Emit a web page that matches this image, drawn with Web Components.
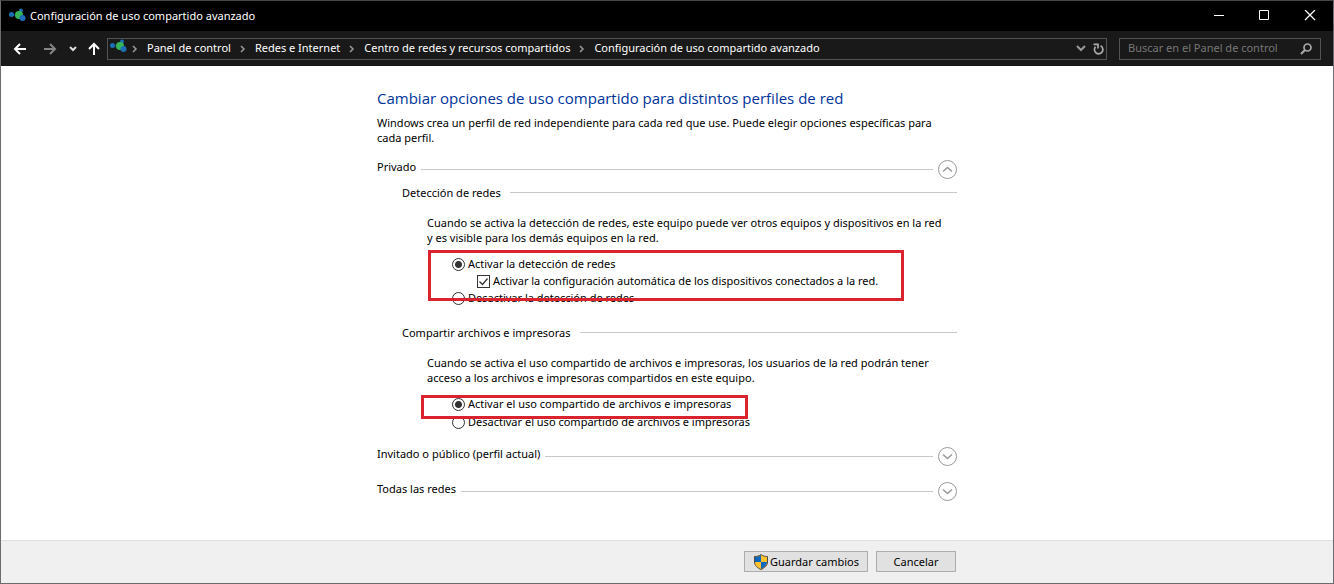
<!DOCTYPE html>
<html lang="es">
<head>
<meta charset="utf-8">
<meta name="viewport" content="width=device-width, initial-scale=1">
<title>Configuración de uso compartido avanzado</title>
<style>
  body {
    margin: 0;
    color: #000;
    background: #fff;
    font: 11px/15px "Noto Sans", "Open Sans", sans-serif;
  }
</style>
</head>
<body>

<settings-window>
  <title-bar slot="title">Configuración de uso compartido avanzado</title-bar>
  <nav-bar slot="nav"></nav-bar>

  <page-intro heading="Cambiar opciones de uso compartido para distintos perfiles de red">
    Windows crea un perfil de red independiente para cada red que use. Puede elegir opciones específicas para<br>cada perfil.
  </page-intro>

  <profile-section label="Privado" open>
    <setting-group heading="Detección de redes">
      <span slot="description">Cuando se activa la detección de redes, este equipo puede ver otros equipos y dispositivos en la red<br>y es visible para los demás equipos en la red.</span>
      <radio-pair name="discovery" on="Activar la detección de redes" off="Desactivar la detección de redes" mark="wide">
        <check-option label="Activar la configuración automática de los dispositivos conectados a la red."></check-option>
      </radio-pair>
    </setting-group>
    <setting-group heading="Compartir archivos e impresoras">
      <span slot="description">Cuando se activa el uso compartido de archivos e impresoras, los usuarios de la red podrán tener<br>acceso a los archivos e impresoras compartidos en este equipo.</span>
      <radio-pair name="sharing" on="Activar el uso compartido de archivos e impresoras" off="Desactivar el uso compartido de archivos e impresoras" mark="narrow"></radio-pair>
    </setting-group>
  </profile-section>
  <profile-section label="Invitado o público (perfil actual)"></profile-section>
  <profile-section label="Todas las redes"></profile-section>

  <action-bar slot="footer"></action-bar>
</settings-window>

<script>
(function () {
  'use strict';

  const NETWORK_ICON = `
    <svg width="18" height="16" viewBox="0 0 18 16" aria-hidden="true">
      <path d="M3 7h7l2-4M10 8l4 4" stroke="#1b5c8c" fill="none"/>
      <circle cx="2.500" cy="6.500" r="2.500" fill="#1b6fb5"/>
      <circle cx="12" cy="2.500" r="2" fill="#1b6fb5"/>
      <circle cx="10" cy="7" r="4" fill="#35b558"/>
      <circle cx="13.500" cy="10" r="3" fill="#1d70b8"/>
    </svg>`;

  // Attaches an open root and fills it; every element below goes through this
  class BaseElement extends HTMLElement {
    connectedCallback() {
      if (this.shadowRoot) return;
      this.attachShadow({ mode: 'open' });
      this.shadowRoot.innerHTML = `<style>*{box-sizing:border-box}button,input{font:inherit;margin:0}</style>${this.template()}`;
      this.ready();
    }

    ready() {}
  }

  class SettingsWindow extends BaseElement {
    template() {
      return `
        <style>
          :host {
            display: flex;
            flex-direction: column;
            box-sizing: border-box;
            min-height: 100vh;
            border: 1px solid #6c6c70;
            border-top-color: #444;
          }
          main { flex: 1; padding: 20px 16px; }
          .column { max-width: 580px; margin: 0 auto; }
        </style>
        <slot name="title"></slot>
        <slot name="nav"></slot>
        <main><div class="column"><slot></slot></div></main>
        <slot name="footer"></slot>`;
    }
  }

  class TitleBar extends BaseElement {
    template() {
      return `
        <style>
          :host { display: flex; align-items: center; height: 30px; padding-left: 8px; background: #000; color: #fff; }
          .text { flex: 1; margin-left: 3px; padding-bottom: 2px; white-space: nowrap; }
          button { width: 46px; height: 30px; padding: 0; border: 0; background: none; color: #fff; }
          svg { display: block; margin: auto; }
        </style>
        <span>${NETWORK_ICON}</span>
        <span class="text"><slot></slot></span>
        <button aria-label="Minimizar"><svg width="12" height="12" stroke="#fff"><path d="M2 5.500h10"/></svg></button>
        <button aria-label="Maximizar"><svg width="12" height="12" stroke="#fff" fill="none"><path d="M1.500 0.500h9v9h-9z"/></svg></button>
        <button aria-label="Cerrar"><svg width="12" height="12" stroke="#fff" stroke-width="1.300"><path d="M1 0l10 10M11 0L1 10"/></svg></button>`;
    }
  }

  class NavBar extends BaseElement {
    template() {
      const path = ['Panel de control', 'Redes e Internet', 'Centro de redes y recursos compartidos', 'Configuración de uso compartido avanzado'];
      const chevron = '<svg width="6" height="8" fill="none" stroke="#999" stroke-width="1.500"><path d="M1 1l3 3-3 3"/></svg>';
      return `
        <style>
          :host { display: flex; align-items: center; height: 35px; padding: 0 12px; background: #191919; color: #fff; }
          svg { display: block; flex: none; }
          button { padding: 0; border: 0; background: none; }
          .history { display: flex; align-items: center; gap: 16px; margin-right: 7px; }
          .history .step { margin: 0 -5px 0 -4px; }
          .address, .search { display: flex; align-items: center; height: 22px; border: 1px solid #535353; }
          .address { flex: 1; min-width: 0; padding: 0 2px; gap: 4px; }
          .address .icon { align-self: flex-start; }
          .address button:last-child { margin-left: 3px; }
          nav { display: flex; flex: 1; align-items: center; gap: 9px; min-width: 0; overflow: hidden; white-space: nowrap; }
          a { padding-bottom: 2px; color: inherit; text-decoration: none; }
          .search { width: 202px; margin-left: 12px; padding: 0 8px; }
          input { flex: 1; min-width: 0; padding: 0 0 2px; border: 0; outline: 0; background: none; color: #fff; }
          input::placeholder { color: #777; opacity: 1; }
        </style>
        <div class="history">
          <button aria-label="Atrás"><svg width="14" height="12" fill="none" stroke="#fff" stroke-width="2"><path d="M13 6H2M7 1L2 6l5 5"/></svg></button>
          <button aria-label="Adelante"><svg width="14" height="12" fill="none" stroke="#858585" stroke-width="2"><path d="M1 6h11M7 1l5 5-5 5"/></svg></button>
          <button class="step" aria-label="Ubicaciones recientes"><svg width="8" height="6" fill="none" stroke="#ddd" stroke-width="2"><path d="M1 1l3 3 3-3"/></svg></button>
          <button aria-label="Subir"><svg width="12" height="13" fill="none" stroke="#fff" stroke-width="2"><path d="M6 13V2M1 7l5-5 5 5"/></svg></button>
        </div>
        <div class="address">
          <span class="icon">${NETWORK_ICON}</span>
          <nav aria-label="Ruta">${path.map((name) => `${chevron}<a href="#">${name}</a>`).join('')}</nav>
          <button aria-label="Ubicaciones anteriores"><svg width="10" height="7" fill="none" stroke="#999" stroke-width="2"><path d="M1 1l4 4 4-4"/></svg></button>
          <button aria-label="Actualizar"><svg width="11" height="12" fill="none" stroke="#aaa" stroke-width="1.700"><path d="M7.500 2.800A4.200 4.200 0 1 1 2.500 3.800M0.500 1.300h4.500v4.200"/></svg></button>
        </div>
        <div class="search">
          <input type="search" aria-label="Buscar" placeholder="Buscar en el Panel de control">
          <svg width="12" height="12" fill="none" stroke="#aaa" stroke-width="1.700"><circle cx="7.500" cy="4.500" r="3.500"/><path d="M5 7L1 11" stroke-width="2"/></svg>
        </div>`;
    }
  }

  class PageIntro extends BaseElement {
    template() {
      return `
        <style>
          :host { display: block; margin-bottom: 14px; }
          h1 { margin: 0 0 5px; color: #003399; font: 15px/24px "Open Sans", sans-serif; white-space: nowrap; }
          p { margin: 0; white-space: nowrap; }
        </style>
        <h1>${this.getAttribute('heading')}</h1>
        <p><slot></slot></p>`;
    }
  }

  class ProfileSection extends BaseElement {
    template() {
      return `
        <style>
          :host { display: block; margin-bottom: 15px; }
          header { display: flex; align-items: center; gap: 5px; height: 20px; }
          h2 { margin: 0 0 5px; font: inherit; }
          hr { flex: 1; margin: 0; border: 0; border-top: 1px solid #c8c8c8; }
          button { width: 19px; height: 19px; padding: 0; border: 0; background: none; }
          svg { display: block; }
          .up { display: none; }
          :host([open]) .up { display: inline; }
          :host([open]) .down { display: none; }
          .body { display: none; padding-left: 25px; }
          :host([open]) .body { display: block; }
        </style>
        <header>
          <h2>${this.getAttribute('label')}</h2>
          <hr>
          <button aria-label="${this.getAttribute('label')}">
            <svg width="19" height="19" fill="none" stroke="#999">
              <circle cx="9.500" cy="9.500" r="9"/>
              <path class="up" d="M5 11.500l4.500-4 4.500 4" stroke-width="1.500"/>
              <path class="down" d="M5 7.500l4.500 4 4.500-4" stroke-width="1.500"/>
            </svg>
          </button>
        </header>
        <div class="body"><slot></slot></div>`;
    }

    ready() {
      this.shadowRoot.querySelector('button').onclick = () => this.toggleAttribute('open');
    }
  }

  class SettingGroup extends BaseElement {
    template() {
      return `
        <style>
          :host { display: block; padding-top: 6px; }
          :host(:not(:first-child)) { padding-top: 18px; }
          header { display: flex; align-items: center; gap: 9px; }
          h3 { margin: 0; font: inherit; }
          hr { flex: 1; margin: 0; border: 0; border-top: 1px solid #c8c8c8; }
          .body { padding: 15px 0 0 25px; }
          p { margin: 0 0 11px; white-space: nowrap; }
        </style>
        <header><h3>${this.getAttribute('heading')}</h3><hr></header>
        <div class="body">
          <p><slot name="description"></slot></p>
          <slot></slot>
        </div>`;
    }
  }

  const CHOICE_STYLE = `
    label { display: flex; align-items: center; gap: 3px; height: 17px; white-space: nowrap; }
    .text { padding-bottom: 2px; }
    input { appearance: none; flex: none; width: 13px; height: 13px; border: 1px solid #333; background: #fff; }`;

  class RadioPair extends BaseElement {
    template() {
      const name = this.getAttribute('name');
      return `
        <style>
          ${CHOICE_STYLE}
          :host { display: block; position: relative; padding-left: 25px; }
          .list { display: grid; }
          :host([mark="narrow"]) .list { gap: 1px; }
          input { border-radius: 50%; }
          input:checked { background: radial-gradient(circle, #333 3px, #fff 4px); }
          .nested { padding-left: 25px; }
          /* red marker drawn over the options */
          .mark { position: absolute; border: 3px solid #d9232e; pointer-events: none; }
          :host([mark="wide"]) .mark { inset: -6px auto auto 1px; width: 476px; height: 51px; }
          :host([mark="narrow"]) .mark { inset: -1px auto auto -6px; width: 327px; height: 24px; }
        </style>
        <div class="list">
          <label><input type="radio" name="${name}" checked><span class="text">${this.getAttribute('on')}</span></label>
          ${this.children.length ? '<div class="nested"><slot></slot></div>' : ''}
          <label><input type="radio" name="${name}"><span class="text">${this.getAttribute('off')}</span></label>
        </div>
        <div class="mark"></div>`;
    }
  }

  class CheckOption extends BaseElement {
    template() {
      return `
        <style>
          ${CHOICE_STYLE}
          :host { display: block; }
          .box { display: grid; }
          .box > * { grid-area: 1 / 1; }
          svg { pointer-events: none; }
          input:not(:checked) + svg { visibility: hidden; }
        </style>
        <label>
          <span class="box">
            <input type="checkbox" checked>
            <svg width="13" height="13" fill="none" stroke="#333" stroke-width="1.300"><path d="M2.500 6.500l3 3 5-6"/></svg>
          </span>
          <span class="text">${this.getAttribute('label')}</span>
        </label>`;
    }
  }

  class ActionBar extends BaseElement {
    template() {
      return `
        <style>
          :host { display: block; padding: 10px 16px 11px; border-top: 1px solid #dfdfdf; background: #f0f0f0; }
          .column { display: flex; justify-content: flex-end; gap: 8px; max-width: 580px; margin: 0 auto; padding-right: 1px; }
          button { display: flex; align-items: center; justify-content: center; gap: 1px; height: 21px; min-width: 80px; padding: 0 8px; border: 1px solid #adadad; background: #e1e1e1; color: #000; white-space: nowrap; }
          .save { min-width: 124px; }
        </style>
        <div class="column">
          <button class="save">
            <svg width="16" height="16" viewBox="0 0 16 16" aria-hidden="true">
              <path d="M8 0.500C6 2 4 2.500 1.500 2.500V8c0 3.500 3 6 6.500 7.500 3.500-1.500 6.500-4 6.500-7.500V2.500C12 2.500 10 2 8 .5z" fill="#fdc22d"/>
              <path d="M8 1C6 2.500 4 3 2 3v5h6zM8 8h6c0 3-2.500 5.500-6 7z" fill="#0b66c0"/>
              <path d="M8 0.500C6 2 4 2.500 1.500 2.500V8c0 3.500 3 6 6.500 7.500 3.500-1.500 6.500-4 6.500-7.500V2.500C12 2.500 10 2 8 .5z" fill="none" stroke="#4c4a43"/>
            </svg>
            Guardar cambios
          </button>
          <button>Cancelar</button>
        </div>`;
    }
  }

  customElements.define('settings-window', SettingsWindow);
  customElements.define('title-bar', TitleBar);
  customElements.define('nav-bar', NavBar);
  customElements.define('page-intro', PageIntro);
  customElements.define('profile-section', ProfileSection);
  customElements.define('setting-group', SettingGroup);
  customElements.define('radio-pair', RadioPair);
  customElements.define('check-option', CheckOption);
  customElements.define('action-bar', ActionBar);
})();
</script>
</body>
</html>
